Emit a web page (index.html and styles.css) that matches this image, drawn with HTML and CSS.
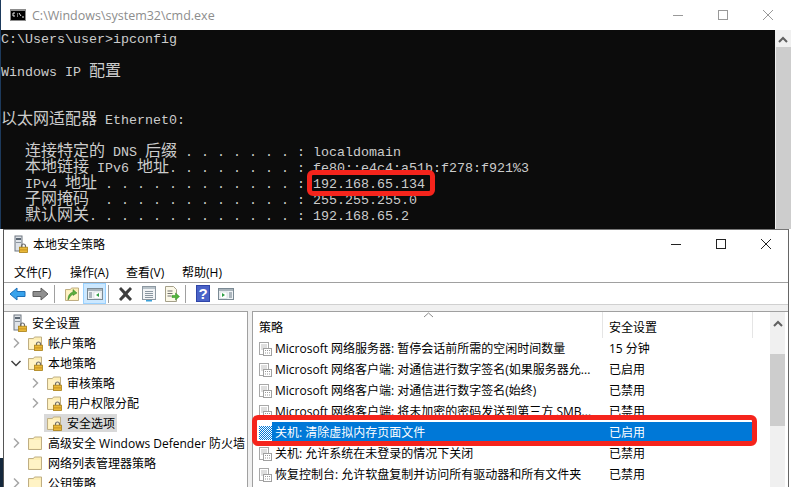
FILE: index.html
```html
<!DOCTYPE html>
<html lang="zh-CN">
<head>
<meta charset="utf-8">
<title>cmd and secpol</title>
<link rel="stylesheet" href="styles.css">
</head>
<body>
<svg class="defs" width="0" height="0" aria-hidden="true">
  <defs>
    <pattern id="dither" width="2" height="2" patternUnits="userSpaceOnUse">
      <rect width="2" height="2" fill="#fff"/>
      <rect width="1" height="1" fill="#0078d7"/>
      <rect x="1" y="1" width="1" height="1" fill="#0078d7"/>
    </pattern>
    <symbol id="lock" viewBox="0 0 9 10">
      <path d="M2.5 4.5V3a2 2 0 0 1 4 0v1.5" fill="none" stroke="#6b6b6b" stroke-width="1.2"/>
      <rect x=".5" y="4.2" width="8" height="5.3" fill="#e9b93a" stroke="#a97f16" stroke-width=".8"/>
      <rect x=".9" y="6.4" width="7.2" height="1" fill="#c9921f"/>
    </symbol>
    <symbol id="folder" viewBox="0 0 16 16">
      <path d="M1.500 14.500V3.500h5l1-1.500h7v12.500z" fill="#fdeeb5" stroke="#bfae83"/>
      <path d="M2.500 5h11v8.500h-11z" fill="#fff3c6"/>
    </symbol>
    <symbol id="server" viewBox="0 0 14 18">
      <rect x="1" y="1" width="7" height="15" fill="#dfe3e8" stroke="#6f7780"/>
      <rect x="2" y="3" width="5" height="2" fill="#5a6672"/>
      <rect x="2" y="7" width="5" height="1" fill="#8a949e"/>
    </symbol>
    <symbol id="policy" viewBox="0 0 13 14">
      <rect x=".5" y=".5" width="9" height="12" fill="#fff" stroke="#a8a8a8"/>
      <path d="M2 3h6M2 5h6M2 7h6" stroke="#bdbdbd"/>
      <rect x="4.500" y="6.500" width="8" height="7" fill="#fff" stroke="#a0a0a0"/>
      <path d="M6 8.500h1M8 8.500h1M10 8.500h1M6 11h1M8 11h1M10 11h1" stroke="#9a9a9a"/>
    </symbol>
    <symbol id="chev-r" viewBox="0 0 12 12">
      <path d="M4 1.500 8.500 6 4 10.500" fill="none" stroke="#a6a6a6" stroke-width="1.500"/>
    </symbol>
    <symbol id="chev-d" viewBox="0 0 12 12">
      <path d="M1.500 4 6 8.500 10.500 4" fill="none" stroke="#404040" stroke-width="1.500"/>
    </symbol>
    <symbol id="win-left" viewBox="0 0 16 16">
      <rect x=".5" y="2.500" width="15" height="11" fill="#eef2f5" stroke="#7b8a94"/>
      <rect x="1" y="3" width="14" height="2" fill="#a9b4bb"/>
      <path d="M2 7h3M2 9h3M2 11h3" stroke="#6b7b85"/>
      <rect x="7" y="6" width="7" height="6.500" fill="#fff" stroke="#c2ccd2" stroke-width=".5"/>
      <path d="M12 7v4L9 9z" fill="#2e9e45"/>
    </symbol>
    <symbol id="win-right" viewBox="0 0 16 16">
      <rect x=".5" y="2.500" width="15" height="11" fill="#eef2f5" stroke="#7b8a94"/>
      <rect x="1" y="3" width="14" height="2" fill="#a9b4bb"/>
      <path d="M11 7h3M11 9h3M11 11h3" stroke="#6b7b85"/>
      <rect x="2" y="6" width="7" height="6.500" fill="#fff" stroke="#c2ccd2" stroke-width=".5"/>
      <path d="M4 7v4l3-2z" fill="#2e9e45"/>
    </symbol>
  </defs>
</svg>

<div class="desk"></div>

<section class="window cmd">
  <header class="cmd-title">
    <svg class="cmd-icon" width="16" height="12" viewBox="0 0 16 12">
      <rect width="16" height="12" fill="#8c8c8c"/>
      <rect x="1" y="2" width="14" height="9" fill="#000"/>
      <path d="M3 4h2M3 4v3M3 7h2M7 5h1M7 7h1M9 4l2 3M12 8h2" stroke="#e8e8e8" fill="none"/>
    </svg>
    <span class="cmd-name">C:\Windows\system32\cmd.exe</span>
    <div class="caption caption-dim">
      <svg width="12" height="12" viewBox="0 0 12 12"><path d="M1 6.500h10" stroke="currentColor"/></svg>
      <svg width="12" height="12" viewBox="0 0 12 12"><rect x="1.500" y="1.500" width="9" height="9" fill="none" stroke="currentColor"/></svg>
      <svg width="12" height="12" viewBox="0 0 12 12"><path d="M1 1l10 10M11 1 1 11" stroke="currentColor" fill="none"/></svg>
    </div>
  </header>
  <div class="cmd-body">
    <div class="console">
      <div class="ln">C:\Users\user&gt;ipconfig</div>
      <div class="ln"></div>
      <div class="ln">Windows IP <span class="z">配置</span></div>
      <div class="ln"></div>
      <div class="ln"></div>
      <div class="ln"><span class="z">以太网适配器</span> Ethernet0:</div>
      <div class="ln"></div>
      <div class="ln">   <span class="z">连接特定的</span> DNS <span class="z">后缀</span> . . . . . . . : localdomain</div>
      <div class="ln">   <span class="z">本地链接</span> IPv6 <span class="z">地址</span>. . . . . . . . : fe80::e4c4:a51b:f278:f921%3</div>
      <div class="ln">   IPv4 <span class="z">地址</span> . . . . . . . . . . . . : 192.168.65.134</div>
      <div class="ln">   <span class="z">子网掩码</span>  . . . . . . . . . . . . : 255.255.255.0</div>
      <div class="ln">   <span class="z">默认网关</span>. . . . . . . . . . . . . : 192.168.65.2</div>
    </div>
    <div class="cmd-scroll">
      <svg class="up" width="10" height="7" viewBox="0 0 10 7"><path d="M1 6 5 2l4 4" fill="none" stroke="#606060" stroke-width="2"/></svg>
      <div class="thumb"></div>
    </div>
  </div>
</section>

<section class="window lsp">
  <header class="lsp-title">
    <svg class="title-icon" width="14" height="18"><use href="#server"/><use href="#lock" x="5" y="8" width="9" height="10"/></svg>
    <span class="lsp-name">本地安全策略</span>
    <div class="caption">
      <svg width="12" height="12" viewBox="0 0 12 12"><path d="M1 6.500h10" stroke="currentColor"/></svg>
      <svg width="12" height="12" viewBox="0 0 12 12"><rect x="1.500" y="1.500" width="9" height="9" fill="none" stroke="currentColor"/></svg>
      <svg width="12" height="12" viewBox="0 0 12 12"><path d="M1 1l10 10M11 1 1 11" stroke="currentColor" fill="none"/></svg>
    </div>
  </header>
  <nav class="menu">
    <span>文件(F)</span><span>操作(A)</span><span>查看(V)</span><span>帮助(H)</span>
  </nav>
  <div class="toolbar">
    <span class="tb"><svg width="17" height="14" viewBox="0 0 17 14"><path d="M1 7l7-6v3.500h8v5H8V13z" fill="#38a3ec" stroke="#1c6fb8"/></svg></span>
    <span class="tb"><svg width="17" height="14" viewBox="0 0 17 14"><path d="M16 7 9 1v3.500H1v5h8V13z" fill="#8f8f8f" stroke="#5f5f5f"/></svg></span>
    <span class="sep"></span>
    <span class="tb"><svg width="16" height="16" viewBox="0 0 16 16"><use href="#folder"/><path d="M4 14c0-5 2-7 5-8V3.500l4 3.500-4 2.500V8c-2 1-3 3-5 6z" fill="#5cae3c" stroke="#2f7d22" stroke-width=".5"/></svg></span>
    <span class="tb tb-on"><svg width="16" height="16"><use href="#win-left"/></svg></span>
    <span class="sep"></span>
    <span class="tb"><svg width="17" height="16" viewBox="0 0 17 16"><path d="M2 3l2-2 4.500 4.500L13 1l2 2-4.500 5 4.500 5-2 2-4.500-4.500L4 15l-2-2 4.500-5z" fill="#3d3d3d"/></svg></span>
    <span class="tb"><svg width="16" height="17" viewBox="0 0 16 17"><rect x="1.500" y="1.500" width="13" height="13" fill="#f2f4f6" stroke="#8d98a1"/><rect x="2" y="2" width="12" height="2" fill="#b9c3ca"/><path d="M4 6.500h8M4 8.500h8M4 10.500h8M4 12.500h8" stroke="#8a96a0"/><rect x="5" y="15" width="6" height="1.500" fill="#3aa0d8"/></svg></span>
    <span class="tb"><svg width="16" height="16" viewBox="0 0 16 16"><path d="M1.500.5h8l3 3v12h-11z" fill="#fbf8e8" stroke="#a5a08a"/><path d="M3.500 5h5M3.500 7.500h5M3.500 10h4" stroke="#6f6f6f"/><path d="M8 9.500h3.500V7l4 3.500-4 3.500v-2.500H8z" fill="#51b53a" stroke="#2f8a22" stroke-width=".5"/></svg></span>
    <span class="sep"></span>
    <span class="tb"><svg width="14" height="17" viewBox="0 0 14 17"><rect width="14" height="17" fill="#2f45a8"/><rect x="1" y="1" width="12" height="15" fill="#4a63c8"/><text class="help-mark" x="7" y="14" text-anchor="middle">?</text></svg></span>
    <span class="tb"><svg width="16" height="16"><use href="#win-right"/></svg></span>
  </div>
  <div class="panes">
    <aside class="tree">
      <div class="row"><span class="node root"><svg width="14" height="18"><use href="#server"/><use href="#lock" x="5" y="8" width="9" height="10"/></svg>安全设置</span></div>
      <div class="row l1"><svg class="chev" width="12" height="12"><use href="#chev-r"/></svg><span class="node"><svg width="16" height="16"><use href="#folder"/><use href="#lock" x="7" y="6" width="9" height="10"/></svg>帐户策略</span></div>
      <div class="row l1"><svg class="chev" width="12" height="12"><use href="#chev-d"/></svg><span class="node"><svg width="16" height="16"><use href="#folder"/><use href="#lock" x="7" y="6" width="9" height="10"/></svg>本地策略</span></div>
      <div class="row l2"><svg class="chev" width="12" height="12"><use href="#chev-r"/></svg><span class="node"><svg width="16" height="16"><use href="#folder"/><use href="#lock" x="7" y="6" width="9" height="10"/></svg>审核策略</span></div>
      <div class="row l2"><svg class="chev" width="12" height="12"><use href="#chev-r"/></svg><span class="node"><svg width="16" height="16"><use href="#folder"/><use href="#lock" x="7" y="6" width="9" height="10"/></svg>用户权限分配</span></div>
      <div class="row l2 no-chev"><span class="node node-sel"><svg width="16" height="16"><use href="#folder"/><use href="#lock" x="7" y="6" width="9" height="10"/></svg>安全选项</span></div>
      <div class="row l1"><svg class="chev" width="12" height="12"><use href="#chev-r"/></svg><span class="node"><svg width="16" height="16"><use href="#folder"/></svg>高级安全 Windows Defender 防火墙</span></div>
      <div class="row l1 no-chev"><span class="node"><svg width="16" height="16"><use href="#folder"/></svg>网络列表管理器策略</span></div>
      <div class="row l1"><svg class="chev" width="12" height="12"><use href="#chev-r"/></svg><span class="node"><svg width="16" height="16"><use href="#folder"/></svg>公钥策略</span></div>
    </aside>
    <main class="list">
      <div class="list-main">
        <div class="list-head">
          <span class="col-name">策略</span>
          <span class="col-set">安全设置</span>
          <svg class="sort" width="11" height="6" viewBox="0 0 11 6"><path d="M1 5l4.500-4L10 5" fill="none" stroke="#8a8a8a"/></svg>
        </div>
        <div class="item"><svg width="13" height="14"><use href="#policy"/></svg><span class="name">Microsoft 网络服务器: 暂停会话前所需的空闲时间数量</span><span class="set">15 分钟</span></div>
        <div class="item"><svg width="13" height="14"><use href="#policy"/></svg><span class="name">Microsoft 网络客户端: 对通信进行数字签名(如果服务器允...</span><span class="set">已启用</span></div>
        <div class="item"><svg width="13" height="14"><use href="#policy"/></svg><span class="name">Microsoft 网络客户端: 对通信进行数字签名(始终)</span><span class="set">已禁用</span></div>
        <div class="item"><svg width="13" height="14"><use href="#policy"/></svg><span class="name">Microsoft 网络客户端: 将未加密的密码发送到第三方 SMB...</span><span class="set">已禁用</span></div>
        <div class="item item-sel"><svg width="13" height="14"><rect width="13" height="14" fill="url(#dither)"/></svg><span class="name">关机: 清除虚拟内存页面文件</span><span class="set">已启用</span></div>
        <div class="item"><svg width="13" height="14"><use href="#policy"/></svg><span class="name">关机: 允许系统在未登录的情况下关闭</span><span class="set">已禁用</span></div>
        <div class="item"><svg width="13" height="14"><use href="#policy"/></svg><span class="name">恢复控制台: 允许软盘复制并访问所有驱动器和所有文件夹</span><span class="set">已禁用</span></div>
      </div>
      <div class="list-scroll">
        <svg class="up" width="10" height="7" viewBox="0 0 10 7"><path d="M1 6 5 2l4 4" fill="none" stroke="#606060" stroke-width="2"/></svg>
        <div class="thumb"></div>
      </div>
    </main>
  </div>
</section>

<div class="mark mark-ip"></div>
<div class="mark mark-row"></div>
</body>
</html>
```

FILE: styles.css
```css
* { box-sizing: border-box; }
html, body { margin: 0; padding: 0; }
body {
  width: 791px;
  height: 487px;
  position: relative;
  overflow: hidden;
  background: #fff;
  font-family: "Open Sans", "Noto Sans CJK SC", sans-serif;
  font-size: 12px;
  color: #000;
}
.defs { position: absolute; }
svg { display: block; flex: none; }

.desk { position: absolute; left: 0; top: 458px; width: 4px; height: 29px; background: #14283c; }
.window { position: absolute; }

.cmd { left: 0; top: 0; width: 791px; height: 229px; border-left: 1px solid #1d3a5c; display: flex; flex-direction: column; }
.cmd-title { height: 30px; display: flex; align-items: center; padding-left: 9px; background: #fff; flex: none; }
.cmd-icon { margin-right: 6px; }
.cmd-name { color: #8d8d8d; font-size: 12.500px; }
.caption { margin-left: auto; display: flex; gap: 33px; padding-right: 16px; color: #222; }
.caption-dim { color: #999; padding-right: 17px; }

.cmd-body { flex: 1; display: flex; min-height: 0; }
.console {
  width: 774px;
  background: #0c0c0c;
  color: #ccc;
  font-family: "Liberation Mono", "Noto Sans CJK SC", monospace;
  font-size: 13.333px;
  padding-top: 2px;
  overflow: hidden;
}
.ln { height: 16px; line-height: 16px; white-space: pre; }
.z { font-size: 16px; line-height: 16px; }
.cmd-scroll { width: 16px; background: #f0f0f0; display: flex; flex-direction: column; align-items: center; }
.cmd-scroll .up { margin: 6px 0 4px; }
.cmd-scroll .thumb { width: 15px; flex: 1; background: #cdcdcd; }

.lsp { left: 3px; top: 229px; width: 786px; height: 258px; background: #fff; border-left: 1px solid #555; border-right: 1px solid #666; border-top: 1px solid #777; display: flex; flex-direction: column; }
.lsp-title { height: 31px; padding-bottom: 3px; display: flex; align-items: center; padding-left: 10px; flex: none; }
.title-icon { margin-right: 5px; }
.lsp-name { font-size: 12px; }

.menu { height: 22px; display: flex; gap: 18px; padding-left: 10px; align-items: center; border-bottom: 1px solid #a0a0a0; flex: none; }
.menu span { width: 38px; white-space: nowrap; }

.toolbar { height: 22px; display: flex; align-items: center; padding-left: 2px; border-bottom: 1px solid #d0d0d0; flex: none; }
.tb { width: 23px; height: 21px; display: flex; align-items: center; justify-content: center; flex: none; }
.tb-on { background: #cce8ff; border: 1px solid #99d1ff; }
.sep { width: 1px; height: 18px; background: #a0a0a0; margin: 0 5px 0 2px; flex: none; }
.help-mark { font-family: "Liberation Sans", sans-serif; font-weight: 700; font-size: 15px; fill: #fff; }

.panes { flex: 1; min-height: 0; display: flex; gap: 4px; background: #f0f0f0; padding-top: 6px; }
.tree { width: 244px; background: #fff; border-top: 1px solid #a0a0a0; border-right: 1px solid #a0a0a0; overflow: hidden; flex: none; white-space: nowrap; padding-top: 1px; }
.row { height: 20px; display: flex; align-items: center; padding-left: 6px; }
.row .chev { margin-right: 3px; }
.row.no-chev { padding-left: 21px; }
.l1 { padding-left: 6px; }
.l2 { padding-left: 25px; }
.row.l2.no-chev { padding-left: 40px; }
.node { display: flex; align-items: center; gap: 5px; padding: 0 2px; height: 18px; }
.root { margin-left: -2px; padding-left: 5px; }
.node-sel { background: #d9d9d9; }

.list { flex: 1; min-width: 0; display: flex; background: #fff; border-top: 1px solid #a0a0a0; border-left: 1px solid #a0a0a0; }
.list-main { width: 517px; flex: none; }
.list-head { height: 26px; display: grid; grid-template-columns: 350px 150px; position: relative; }
.col-name { padding: 6px 0 0 6px; border-right: 1px solid #e5e5e5; }
.col-set { padding: 6px 0 0 6px; border-right: 1px solid #e5e5e5; }
.sort { position: absolute; left: 170px; top: 0; }
.item { height: 21px; display: grid; grid-template-columns: 19px 331px 150px; align-items: center; white-space: nowrap; }
.item svg { margin-left: 6px; }
.name, .set { height: 21px; line-height: 22px; padding-left: 3px; overflow: hidden; }
.set { padding-left: 6px; }
.item-sel { color: #fff; }
.item-sel .name, .item-sel .set { background: #0078d7; }
.list-scroll { width: 15px; background: #f0f0f0; display: flex; flex-direction: column; align-items: center; }
.list-scroll .up { margin: 8px 0 27px; }
.list-scroll .thumb { width: 15px; height: 72px; background: #cdcdcd; }

.mark { position: absolute; border: 5px solid #f5241c; border-radius: 6px; }
.mark-ip { left: 307px; top: 170px; width: 128px; height: 26px; }
.mark-row { left: 252px; top: 415px; width: 505px; height: 31px; }
```
